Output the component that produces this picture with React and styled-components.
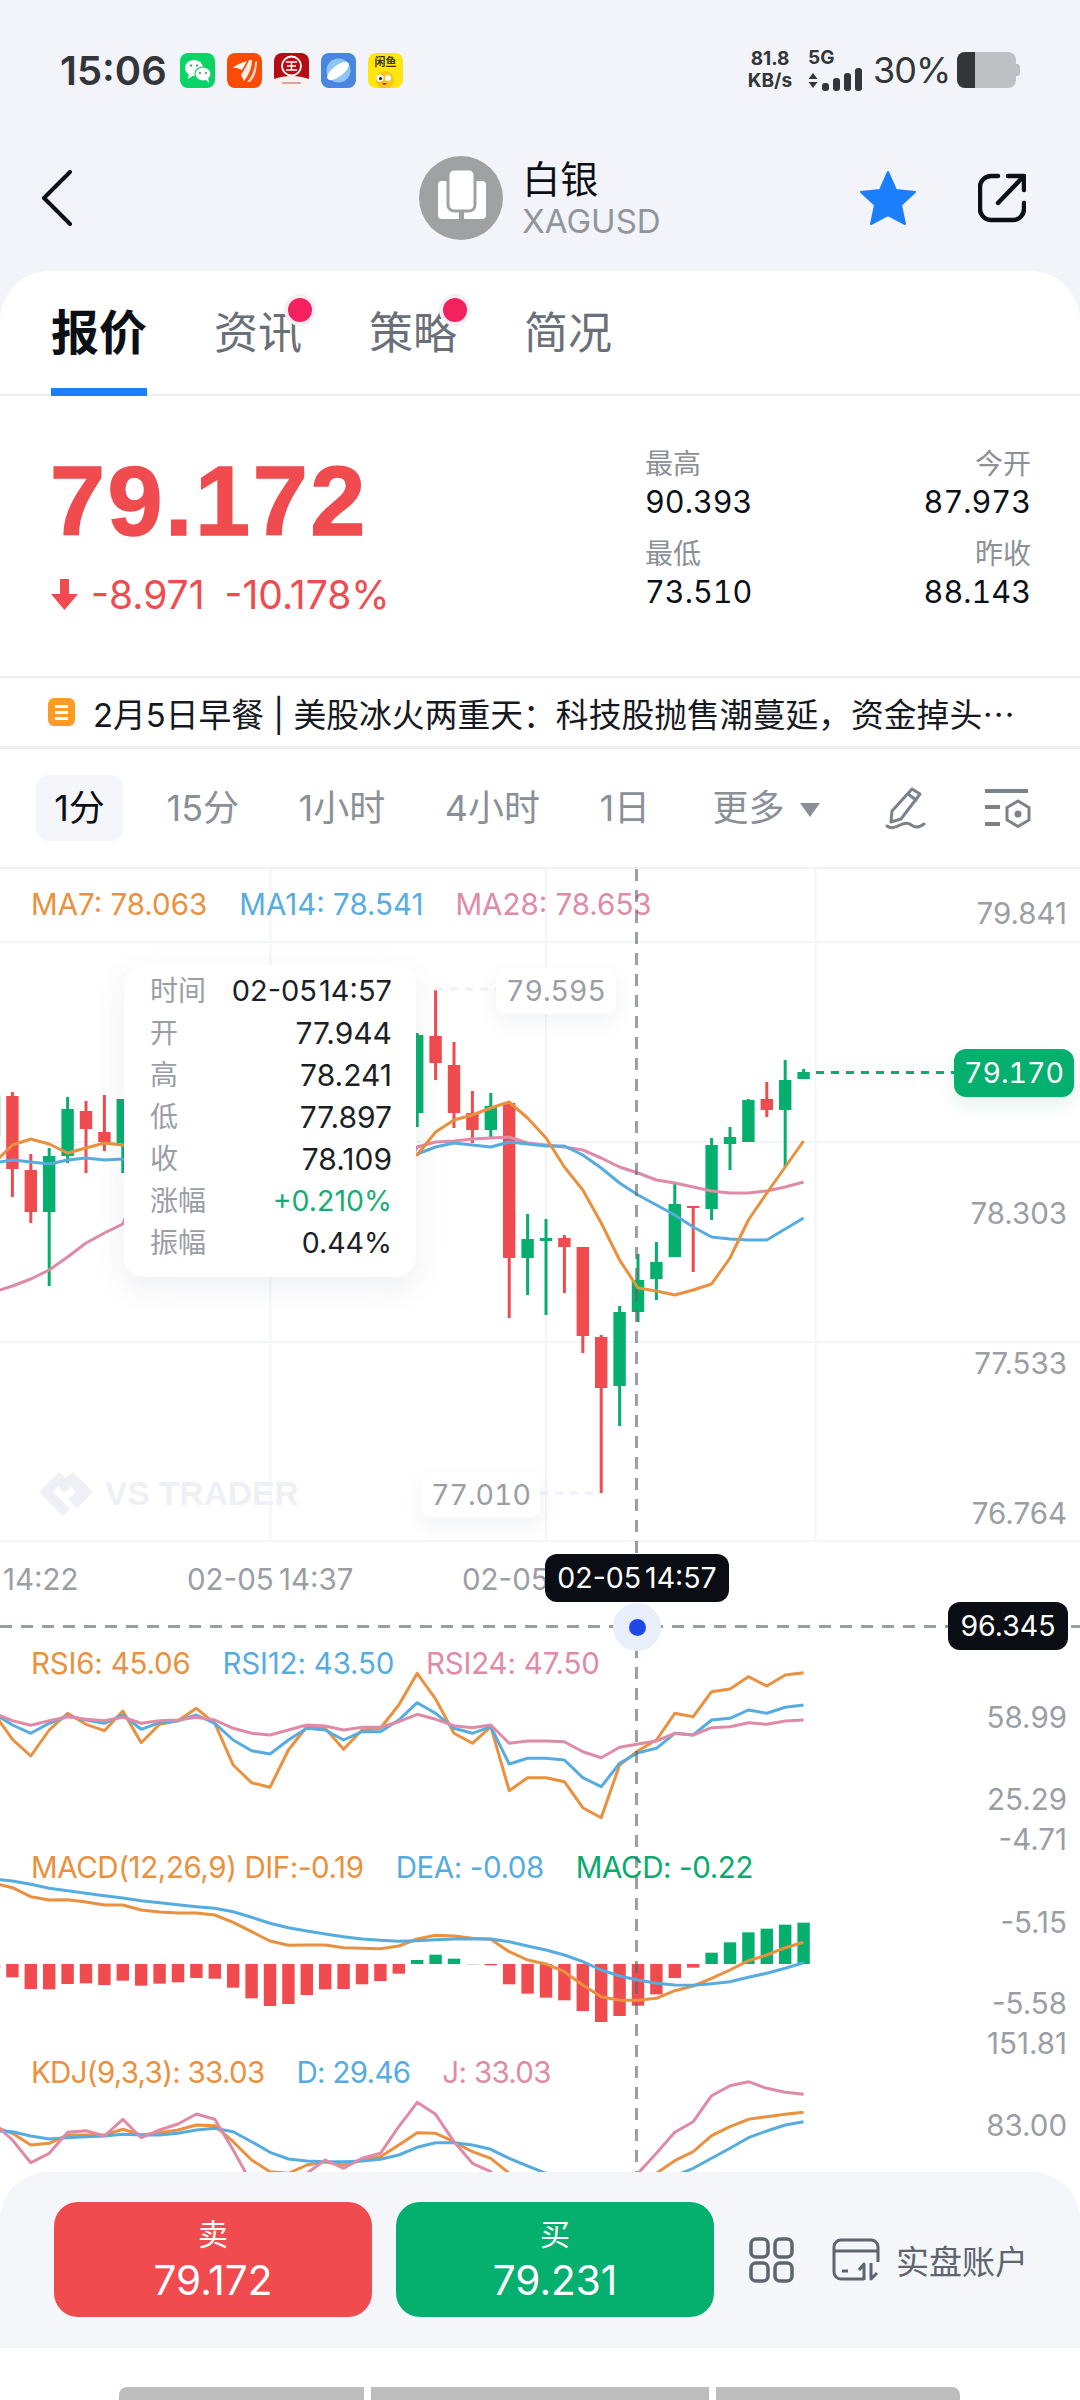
import React from 'react';
import styled, { createGlobalStyle } from 'styled-components';

const GlobalStyle = createGlobalStyle`
	html, body {
		margin: 0;
		padding: 0;
		background: #fff;
	}
	body {
		width: 1080px;
		height: 2400px;
		overflow: hidden;
		font-family: Inter, "Noto Sans CJK SC", sans-serif;
	}
	* {
		box-sizing: border-box;
	}
`;

const RED = '#f04b4f';
const GREEN = '#05b06e';
const ORANGE = '#e9913e';
const BLUE = '#57acdf';
const PINK = '#df8ba7';
const AXIS = '#9a9ea5';
const GRID = '#f3f5f8';

const Page = styled.div`
	width: 1080px;
	height: 2400px;
	display: flex;
	flex-direction: column;
	background: #f2f4f9;
`;

const StatusBar = styled.div`
	height: 138px;
	display: flex;
	align-items: center;
	padding: 2px 60px 0;
	color: #333538;
`;

const Clock = styled.span`
	font-size: 40px;
	font-weight: 600;
	width: 120px;
`;

const AppIcons = styled.div`
	display: flex;
	gap: 12px;
`;

const AppIcon = styled.svg`
	width: 35px;
	height: 35px;
	border-radius: 8px;
	display: block;
`;

const StatusRight = styled.div`
	margin-left: auto;
	display: flex;
	align-items: center;
`;

const Speed = styled.div`
	width: 46px;
	text-align: center;
	font-size: 19px;
	line-height: 22px;
	font-weight: 700;
	white-space: nowrap;
	margin-right: 15px;
`;

const Network = styled.div`
	width: 54px;
	font-size: 19px;
	font-weight: 700;
	line-height: 18px;
`;

const Percent = styled.span`
	width: 74px;
	font-size: 36px;
	letter-spacing: -1px;
	white-space: nowrap;
	margin: 0 10px 0 11px;
`;

const Battery = styled.div`
	width: 59px;
	height: 36px;
	border-radius: 8px;
	background: #bfc0c4;
	overflow: hidden;
	position: relative;
	&::before {
		content: '';
		display: block;
		width: 18px;
		height: 100%;
		background: #333538;
	}
`;

const BatteryCap = styled.div`
	width: 4px;
	height: 12px;
	background: #bfc0c4;
	border-radius: 0 3px 3px 0;
`;

const Header = styled.div`
	height: 120px;
	display: grid;
	grid-template-columns: 1fr auto 1fr;
	align-items: center;
	margin-bottom: 13px;
`;

const BackBox = styled.div`
	padding-left: 41px;
	display: flex;
`;

const Title = styled.div`
	display: flex;
	align-items: center;
	gap: 19px;
`;

const TitleText = styled.div`
	display: flex;
	flex-direction: column;
`;

const TitleName = styled.span`
	font-size: 38px;
	line-height: 46px;
	color: #0b0f16;
`;

const TitleCode = styled.span`
	font-size: 33px;
	line-height: 38px;
	color: #90959c;
`;

const HeaderActions = styled.div`
	display: flex;
	justify-content: flex-end;
	align-items: center;
	gap: 61px;
	padding-right: 54px;
`;

const Sheet = styled.div`
	flex: 1;
	min-height: 0;
	background: #fff;
	border-radius: 50px 50px 0 0;
	display: flex;
	flex-direction: column;
`;

const Tabs = styled.div`
	height: 125px;
	flex: none;
	display: flex;
	gap: 67px;
	padding-left: 51px;
	border-bottom: 2px solid #eceef1;
`;

const Tab = styled.div`
	position: relative;
	height: 125px;
	line-height: 124px;
	width: ${p => (p.$active ? 96 : 88)}px;
	text-align: center;
	font-size: ${p => (p.$active ? 48 : 44)}px;
	font-weight: ${p => (p.$active ? 700 : 400)};
	color: ${p => (p.$active ? '#0b0f16' : '#6a7079')};
	${p => p.$active && `
		&::after {
			content: '';
			position: absolute;
			left: 0;
			right: 0;
			bottom: 0;
			height: 8px;
			background: #1b7ffb;
		}
	`}
`;

const TabDot = styled.span`
	position: absolute;
	left: 74px;
	top: 27px;
	width: 24px;
	height: 24px;
	border-radius: 50%;
	background: #f5215e;
	box-shadow: 0 0 0 4px #f3eff5;
`;

const Quote = styled.div`
	height: 282px;
	flex: none;
	display: flex;
	justify-content: space-between;
	padding: 0 49px 0 50px;
	border-bottom: 2px solid #eceef1;
`;

const QuoteMain = styled.div`
	padding-top: 50px;
	color: ${RED};
`;

const BigPrice = styled.div`
	font-family: "Liberation Sans", Arial, sans-serif;
	font-size: 99px;
	line-height: 110px;
	font-weight: 700;
	letter-spacing: 2.5px;
	-webkit-text-stroke: 1.5px ${RED};
`;

const ChangeRow = styled.div`
	display: flex;
	align-items: center;
	margin-top: 13px;
	height: 50px;
	padding-left: 1px;
	font-size: 39px;
`;

const ChangeValue = styled.span`
	margin-left: ${p => p.$gap}px;
`;

const StatGrid = styled.div`
	width: 386px;
	padding-top: 50px;
	display: grid;
	grid-template-columns: 1fr 1fr;
	grid-auto-rows: 74px;
	row-gap: 16px;
`;

const Stat = styled.div`
	text-align: ${p => (p.$right ? 'right' : 'left')};
`;

const StatLabel = styled.div`
	font-size: 28px;
	line-height: 37px;
	color: #8c9097;
`;

const StatValue = styled.div`
	font-size: 30.6px;
	line-height: 37px;
	font-variant-numeric: tabular-nums;
	color: #0b0f16;
`;

const Notice = styled.div`
	height: 71px;
	flex: none;
	display: flex;
	align-items: center;
	gap: 18px;
	padding-left: 48px;
	color: #16191f;
	font-size: 32.8px;
	white-space: nowrap;
	border-bottom: 3px solid #eceef1;
`;

const NoticeIcon = styled.div`
	width: 27px;
	height: 28px;
	border-radius: 6px;
	background: #fd9b26;
	display: flex;
	flex-direction: column;
	justify-content: center;
	align-items: center;
	gap: 3px;
`;

const NoticeBar = styled.span`
	width: 13px;
	height: 3px;
	background: #fff;
`;

const Dots = styled.span`
	font-family: "Noto Sans CJK SC", sans-serif;
`;

const Periods = styled.div`
	height: 120px;
	flex: none;
	display: flex;
	align-items: center;
	gap: 27.5px;
	padding: 0 49px 0 36px;
	border-bottom: 2px solid #f0f2f5;
`;

const Period = styled.div`
	height: 66px;
	line-height: 66px;
	min-width: ${p => (p.$active ? '87px' : '0')};
	margin-left: ${p => p.$shift || 0}px;
	padding: 0 16px;
	border-radius: 12px;
	text-align: center;
	white-space: nowrap;
	font-size: 36px;
	color: ${p => (p.$active ? '#0b0f16' : '#8a9098')};
	background: ${p => (p.$active ? '#f4f6fa' : 'transparent')};
`;

const Caret = styled.span`
	display: inline-block;
	margin-left: 15px;
	border-left: 10.5px solid transparent;
	border-right: 10.5px solid transparent;
	border-top: 14px solid #8a9098;
	vertical-align: 4px;
`;

const PeriodTools = styled.div`
	margin-left: auto;
	display: flex;
	align-items: center;
	gap: 59px;
`;

const ChartArea = styled.div`
	position: relative;
	height: 1303px;
	flex: none;
	overflow: hidden;
	background: #fff;
`;

const Panel = styled.div`
	position: relative;
	height: ${p => p.$h}px;
`;

const PanelSvg = styled.svg`
	position: absolute;
	left: 0;
	top: 0;
	width: 1080px;
	height: 100%;
	overflow: visible;
`;

const Legend = styled.div`
	position: relative;
	display: flex;
	gap: 32px;
	padding-left: 31px;
	font-size: 29.5px;
	letter-spacing: ${p => p.$track || 0}px;
	line-height: ${p => p.$line}px;
	white-space: nowrap;
`;

const LegendItem = styled.span`
	color: ${p => p.$color};
`;

const AxisLabel = styled.span`
	position: absolute;
	right: 13px;
	transform: translateY(-50%);
	font-size: 29.5px;
	line-height: 34px;
	color: ${AXIS};
`;

const TimeLabel = styled.span`
	position: absolute;
	top: 20px;
	font-size: 29.5px;
	line-height: 34px;
	word-spacing: -3px;
	color: ${AXIS};
`;

const Watermark = styled.div`
	position: absolute;
	left: 39px;
	top: 603px;
	display: flex;
	align-items: center;
	gap: 12px;
	font-family: "Liberation Sans", Arial, sans-serif;
	font-size: 33.5px;
	font-weight: 700;
	color: #eff0f5;
`;

const Tooltip = styled.div`
	position: absolute;
	z-index: 3;
	left: 124px;
	top: 96px;
	width: 292px;
	height: 312px;
	padding: 5px 24px 0 26px;
	background: #fff;
	border-radius: 20px;
	box-shadow: 0 10px 30px rgba(80, 90, 120, 0.1);
`;

const TooltipRow = styled.div`
	display: flex;
	justify-content: space-between;
	height: 42px;
	line-height: 42px;
`;

const TooltipLabel = styled.span`
	font-size: 28px;
	color: #9a9ea5;
`;

const TooltipValue = styled.span`
	font-size: ${p => p.$size || 30}px;
	word-spacing: -6px;
	color: ${p => p.$color || '#1c1f26'};
`;

const PriceTag = styled.div`
	position: absolute;
	left: ${p => p.$left}px;
	top: ${p => p.$top}px;
	width: ${p => p.$width}px;
	height: 46px;
	line-height: 46px;
	text-align: center;
	font-size: 28.5px;
	font-variant-numeric: tabular-nums;
	color: ${AXIS};
	background: #fff;
	border-radius: 10px;
	box-shadow: 0 8px 20px rgba(80, 90, 120, 0.08);
`;

const LastPrice = styled.div`
	position: absolute;
	left: 954px;
	top: 180px;
	width: 120px;
	height: 48px;
	line-height: 48px;
	text-align: center;
	border-radius: 12px;
	font-size: 28.5px;
	font-variant-numeric: tabular-nums;
	color: #fff;
	background: ${GREEN};
	box-shadow: 0 8px 18px rgba(5, 176, 110, 0.12);
`;

const CrossV = styled.div`
	position: absolute;
	z-index: 2;
	left: 635px;
	top: 0;
	bottom: 0;
	width: 3px;
	background: repeating-linear-gradient(to bottom, rgba(95, 100, 110, 0.62) 0 12px, transparent 12px 21px);
`;

const CrossH = styled.div`
	position: absolute;
	z-index: 2;
	left: 0;
	right: 0;
	top: 83px;
	height: 3px;
	background: repeating-linear-gradient(to right, #9a9ea5 0 12px, transparent 12px 21px);
`;

const CrossDot = styled.div`
	position: absolute;
	z-index: 3;
	left: 613px;
	top: 61px;
	width: 48px;
	height: 48px;
	border-radius: 50%;
	background: #e9eefb;
	display: flex;
	align-items: center;
	justify-content: center;
	&::after {
		content: '';
		width: 17px;
		height: 17px;
		border-radius: 50%;
		background: #1f48e8;
	}
`;

const DarkPill = styled.div`
	position: absolute;
	z-index: 3;
	left: ${p => p.$left}px;
	top: ${p => p.$top}px;
	width: ${p => p.$width}px;
	height: 48px;
	line-height: 48px;
	text-align: center;
	font-size: ${p => p.$size}px;
	word-spacing: -4px;
	color: #fff;
	background: #0a0d14;
	border-radius: 12px;
`;

const BottomBar = styled.div`
	height: 176px;
	flex: none;
	display: flex;
	align-items: flex-start;
	padding: 30px 0 0 54px;
	background: #f4f6f9;
	border-radius: 48px 48px 0 0;
`;

const TradeButton = styled.div`
	width: 318px;
	height: 115px;
	margin-right: 24px;
	border-radius: 24px;
	background: ${p => p.$color};
	color: #fff;
	text-align: center;
`;

const TradeSide = styled.div`
	font-size: 30px;
	line-height: 36px;
	padding-top: 14px;
`;

const TradePrice = styled.div`
	font-size: 40.5px;
	line-height: 46px;
	margin-top: 6px;
`;

const BarTools = styled.div`
	display: flex;
	align-items: center;
	height: 115px;
	margin-left: 11px;
	gap: 38px;
`;

const Account = styled.div`
	display: flex;
	align-items: center;
	gap: 16px;
	font-size: 33px;
	color: #5f656e;
`;

const NavArea = styled.div`
	flex: 1;
	display: flex;
	align-items: flex-end;
	gap: 7px;
	padding-left: 119px;
	background: #fff;
`;

const NavSegment = styled.div`
	width: ${p => p.$w}px;
	height: 13px;
	background: #bdbdbd;
	border-radius: ${p => p.$radius};
`;

// candle x position, the bars are 18.4px apart
const xAt = i => 12.4 + 18.4 * i;

// the indicator values are read at 3x from the screenshot, so they stay whole numbers
const toPoints = (values, offset) =>
	values.map((v, k) => `${xAt(k - 1).toFixed(1)},${(v / 3 + offset).toFixed(1)}`).join(' ');

// [index, colour, body top, body bottom, wick top, wick bottom], in page y
const candles = [
	[-1, GREEN, 1095, 1137, 1095, 1137],
	[0, RED, 1096, 1169, 1092, 1197],
	[1, RED, 1170, 1212, 1154, 1223],
	[2, GREEN, 1156, 1212, 1148, 1286],
	[3, GREEN, 1109, 1156, 1097, 1163],
	[4, RED, 1111, 1129, 1101, 1173],
	[5, RED, 1132, 1142, 1095, 1151],
	[6, GREEN, 1099, 1143, 1099, 1173],
	[22, GREEN, 1035, 1113, 1033, 1127],
	[23, RED, 1036, 1063, 990, 1080],
	[24, RED, 1065, 1113, 1042, 1128],
	[25, RED, 1113, 1130, 1091, 1143],
	[26, GREEN, 1106, 1130, 1093, 1137],
	[27, RED, 1103, 1258, 1102, 1318],
	[28, GREEN, 1239, 1258, 1214, 1295],
	[29, GREEN, 1238, 1241, 1219, 1315],
	[30, RED, 1238, 1247, 1235, 1293],
	[31, RED, 1247, 1336, 1247, 1353],
	[32, RED, 1337, 1388, 1335, 1493],
	[33, GREEN, 1312, 1386, 1306, 1426],
	[34, GREEN, 1280, 1312, 1254, 1322],
	[35, GREEN, 1262, 1279, 1242, 1300],
	[36, GREEN, 1204, 1257, 1182, 1257],
	[37, RED, 1206, 1208, 1206, 1272],
	[38, GREEN, 1145, 1209, 1138, 1220],
	[39, GREEN, 1137, 1144, 1127, 1170],
	[40, GREEN, 1100, 1142, 1099, 1142],
	[41, RED, 1099, 1110, 1082, 1117],
	[42, GREEN, 1080, 1110, 1060, 1167],
	[43, GREEN, 1072, 1079, 1069, 1079],
];

// page y per bar: index -1..6, then 15 bars hidden by the tooltip, then 22..43
const withHidden = (left, hidden, right) => [...left, ...Array(15).fill(hidden), ...right];
const ma7 = withHidden(
	[1163, 1145, 1139, 1144, 1153, 1148, 1143, 1145],
	1145,
	[1155, 1132, 1120, 1115, 1108, 1102, 1118, 1138, 1167, 1190, 1223, 1260, 1288, 1291, 1295, 1290, 1284, 1258, 1220, 1193, 1167, 1141],
);
const ma14 = withHidden(
	[1163, 1160, 1162, 1164, 1160, 1158, 1160, 1159],
	1159,
	[1154, 1147, 1143, 1145, 1147, 1142, 1144, 1146, 1146, 1155, 1168, 1183, 1195, 1205, 1215, 1227, 1237, 1239, 1240, 1240, 1229, 1218],
);
const ma28 = withHidden(
	[1292, 1286, 1279, 1270, 1257, 1243, 1233, 1224],
	1180,
	[1147, 1142, 1141, 1139, 1138, 1137, 1143, 1145, 1147, 1150, 1158, 1167, 1173, 1180, 1183, 1187, 1191, 1193, 1193, 1191, 1187, 1182],
);
const maPoints = values => values.map((y, k) => `${xAt(k - 1).toFixed(1)},${y - 869}`).join(' ');

const rsi6 = [1000, 1078, 1128, 1050, 1000, 1033, 1052, 993, 1088, 1033, 1022, 985, 1030, 1155, 1208, 1222, 1110, 1040, 1045, 1108, 1050, 1045, 975, 880, 957, 1060, 1090, 1040, 1232, 1193, 1193, 1205, 1283, 1313, 1155, 1112, 1080, 1000, 1010, 935, 927, 890, 918, 885, 878];
const rsi12 = [1000, 1035, 1060, 1030, 1008, 1020, 1030, 1005, 1048, 1028, 1022, 1005, 1030, 1080, 1112, 1122, 1080, 1045, 1050, 1080, 1055, 1055, 1020, 968, 1000, 1045, 1060, 1040, 1152, 1135, 1135, 1140, 1193, 1220, 1150, 1118, 1105, 1060, 1065, 1020, 1015, 990, 1000, 982, 975];
const rsi24 = [1000, 1022, 1036, 1022, 1010, 1018, 1022, 1012, 1030, 1022, 1020, 1012, 1020, 1045, 1060, 1065, 1050, 1035, 1038, 1050, 1042, 1042, 1025, 1003, 1018, 1037, 1043, 1035, 1090, 1083, 1083, 1085, 1115, 1133, 1102, 1092, 1083, 1060, 1065, 1043, 1040, 1028, 1033, 1023, 1020];

const dif = [130, 143, 170, 180, 179, 186, 195, 195, 210, 216, 219, 219, 225, 247, 275, 303, 316, 315, 315, 323, 325, 326, 318, 297, 286, 288, 295, 298, 335, 360, 372, 395, 435, 470, 481, 481, 475, 452, 438, 415, 390, 362, 345, 323, 307];
const dea = [118, 123, 133, 145, 152, 160, 167, 174, 182, 188, 194, 200, 205, 215, 232, 250, 263, 273, 282, 290, 297, 301, 304, 302, 299, 297, 297, 297, 305, 318, 330, 345, 365, 390, 408, 420, 430, 435, 436, 431, 425, 412, 400, 385, 368];
// bar ends, baseline is 372
const macdBars = [385, 412, 447, 448, 432, 430, 435, 422, 437, 431, 427, 414, 416, 443, 475, 498, 492, 465, 448, 447, 433, 423, 401, 360, 344, 356, 374, 376, 433, 461, 473, 481, 513, 546, 528, 497, 463, 414, 383, 338, 307, 277, 266, 254, 248];

const kdjK = [860, 880, 915, 910, 885, 885, 885, 868, 885, 878, 870, 855, 857, 905, 960, 995, 1000, 975, 965, 975, 960, 950, 915, 878, 880, 905, 935, 955, 1000, 1040, 1080, 1100, 1120, 1110, 1080, 1040, 1000, 962, 935, 887, 860, 838, 830, 823, 817];
const kdjD = [872, 875, 888, 897, 893, 890, 888, 883, 885, 885, 880, 870, 865, 875, 905, 937, 957, 963, 965, 965, 963, 958, 945, 922, 908, 908, 915, 928, 955, 978, 1000, 1030, 1060, 1090, 1110, 1100, 1030, 1008, 985, 955, 925, 893, 873, 855, 845];
const kdjJ = [850, 900, 968, 940, 877, 872, 888, 838, 893, 870, 852, 822, 838, 930, 1030, 1080, 1040, 1000, 960, 985, 955, 940, 860, 787, 823, 905, 970, 995, 1050, 1100, 1130, 1150, 1150, 1100, 1040, 1000, 940, 877, 845, 767, 737, 725, 745, 757, 763];

const GridLines = () => (
	<g stroke={GRID} strokeWidth="2">
		<line x1="0" y1="73" x2="1080" y2="73" />
		<line x1="0" y1="273" x2="1080" y2="273" />
		<line x1="0" y1="473" x2="1080" y2="473" />
		<line x1="0" y1="672" x2="1080" y2="672" />
		<line x1="270.5" y1="0" x2="270.5" y2="672" />
		<line x1="546" y1="0" x2="546" y2="672" />
		<line x1="815.5" y1="0" x2="815.5" y2="672" />
	</g>
);

const Candle = ({ i, color, top, bottom, wickTop, wickBottom }) => (
	<g fill={color}>
		<rect x={xAt(i) - 1.5} y={wickTop - 869} width="3" height={wickBottom - wickTop} />
		<rect x={xAt(i) - 6.2} y={top - 869} width="12.4" height={bottom - top} />
	</g>
);

const Line = ({ points, color }) => (
	<polyline points={points} fill="none" stroke={color} strokeWidth="3" strokeLinejoin="round" />
);

const KlinePanel = () => (
	<Panel $h={673}>
		<PanelSvg>
			<GridLines />
			{candles.map(([i, color, top, bottom, wickTop, wickBottom]) => (
				<Candle key={i} i={i} color={color} top={top} bottom={bottom} wickTop={wickTop} wickBottom={wickBottom} />
			))}
			<Line points={maPoints(ma28)} color={PINK} />
			<Line points={maPoints(ma14)} color={BLUE} />
			<Line points={maPoints(ma7)} color={ORANGE} />
			<line x1="816" y1="203.5" x2="955" y2="203.5" stroke={GREEN} strokeWidth="3" strokeDasharray="8 7" />
			<line x1="435" y1="120" x2="496" y2="120" stroke="#eef0fb" strokeWidth="3" strokeDasharray="8 7" />
			<line x1="540" y1="624" x2="600" y2="624" stroke="#eef0fb" strokeWidth="3" strokeDasharray="8 7" />
		</PanelSvg>
		<Legend $line={70}>
			<LegendItem $color={ORANGE}>MA7: 78.063</LegendItem>
			<LegendItem $color={BLUE}>MA14: 78.541</LegendItem>
			<LegendItem $color={PINK}>MA28: 78.653</LegendItem>
		</Legend>
		<Watermark>
			<svg width="54" height="44" viewBox="0 0 54 44">
				<path d="M0 20 L20 0 L27 7 L14 20 L31 37 L24 44 Z M24 7 L34 0 L54 20 L38 36 L29 27 L37 20 L32 15 L25 21 L19 14 Z" fill="#eff0f5" />
			</svg>
			VS TRADER
		</Watermark>
		<AxisLabel style={{ top: 44 }}>79.841</AxisLabel>
		<AxisLabel style={{ top: 344 }}>78.303</AxisLabel>
		<AxisLabel style={{ top: 494 }}>77.533</AxisLabel>
		<AxisLabel style={{ top: 644 }}>76.764</AxisLabel>
		<Tooltip>
			<TooltipRow><TooltipLabel>时间</TooltipLabel><TooltipValue $size={29}>02-05 14:57</TooltipValue></TooltipRow>
			<TooltipRow><TooltipLabel>开</TooltipLabel><TooltipValue>77.944</TooltipValue></TooltipRow>
			<TooltipRow><TooltipLabel>高</TooltipLabel><TooltipValue>78.241</TooltipValue></TooltipRow>
			<TooltipRow><TooltipLabel>低</TooltipLabel><TooltipValue>77.897</TooltipValue></TooltipRow>
			<TooltipRow><TooltipLabel>收</TooltipLabel><TooltipValue>78.109</TooltipValue></TooltipRow>
			<TooltipRow><TooltipLabel>涨幅</TooltipLabel><TooltipValue $color="#16ad74" $size={28.5}>+0.210%</TooltipValue></TooltipRow>
			<TooltipRow><TooltipLabel>振幅</TooltipLabel><TooltipValue $size={28.5}>0.44%</TooltipValue></TooltipRow>
		</Tooltip>
		<PriceTag $left={496} $top={99} $width={120}>79.595</PriceTag>
		<PriceTag $left={422} $top={603} $width={118}>77.010</PriceTag>
		<LastPrice>79.170</LastPrice>
	</Panel>
);

const TimePanel = () => (
	<Panel $h={98}>
		<TimeLabel style={{ left: 3 }}>14:22</TimeLabel>
		<TimeLabel style={{ left: 187 }}>02-05 14:37</TimeLabel>
		<TimeLabel style={{ left: 462 }}>02-05</TimeLabel>
		<DarkPill $left={545} $top={12} $width={184} $size={28.5}>02-05 14:57</DarkPill>
		<CrossH />
		<CrossDot />
		<DarkPill $left={948} $top={60} $width={120} $size={28.5}>96.345</DarkPill>
	</Panel>
);

const RsiPanel = () => (
	<Panel $h={200}>
		<PanelSvg>
			<Line points={toPoints(rsi6, -260)} color={ORANGE} />
			<Line points={toPoints(rsi12, -260)} color={BLUE} />
			<Line points={toPoints(rsi24, -260)} color={PINK} />
		</PanelSvg>
		<Legend $line={46} $track={-0.2}>
			<LegendItem $color={ORANGE}>RSI6: 45.06</LegendItem>
			<LegendItem $color={BLUE}>RSI12: 43.50</LegendItem>
			<LegendItem $color={PINK}>RSI24: 47.50</LegendItem>
		</Legend>
		<AxisLabel style={{ top: 77 }}>58.99</AxisLabel>
		<AxisLabel style={{ top: 159 }}>25.29</AxisLabel>
		<AxisLabel style={{ top: 199 }}>-4.71</AxisLabel>
	</Panel>
);

const MacdPanel = () => (
	<Panel $h={205}>
		<PanelSvg>
			{macdBars.map((v, k) => {
				const up = v < 372;
				const faint = k === 26;
				return (
					<rect
						key={k}
						x={xAt(k - 1) - 6.2}
						y={Math.min(v, 372) / 3}
						width="12.4"
						height={Math.abs(v - 372) / 3}
						fill={faint ? '#e6b4b8' : up ? GREEN : RED}
					/>
				);
			})}
			<Line points={toPoints(dif, 0)} color={ORANGE} />
			<Line points={toPoints(dea, 0)} color={BLUE} />
		</PanelSvg>
		<Legend $line={54} $track={-0.4}>
			<LegendItem $color={ORANGE}>MACD(12,26,9) DIF:-0.19</LegendItem>
			<LegendItem $color={BLUE}>DEA: -0.08</LegendItem>
			<LegendItem $color="#07ab6d">MACD: -0.22</LegendItem>
		</Legend>
		<AxisLabel style={{ top: 82 }}>-5.15</AxisLabel>
		<AxisLabel style={{ top: 163 }}>-5.58</AxisLabel>
		<AxisLabel style={{ top: 203 }}>151.81</AxisLabel>
	</Panel>
);

const KdjPanel = () => (
	<Panel $h={127}>
		<PanelSvg>
			<Line points={toPoints(kdjK, -205)} color={ORANGE} />
			<Line points={toPoints(kdjD, -205)} color={BLUE} />
			<Line points={toPoints(kdjJ, -205)} color={PINK} />
		</PanelSvg>
		<Legend $line={54} $track={-0.7}>
			<LegendItem $color={ORANGE}>KDJ(9,3,3): 33.03</LegendItem>
			<LegendItem $color={BLUE}>D: 29.46</LegendItem>
			<LegendItem $color={PINK}>J: 33.03</LegendItem>
		</Legend>
		<AxisLabel style={{ top: 80 }}>83.00</AxisLabel>
	</Panel>
);

const WechatIcon = () => (
	<AppIcon viewBox="0 0 35 35">
		<rect width="35" height="35" fill="#0ad466" />
		<ellipse cx="14" cy="15" rx="9" ry="8" fill="#fff" />
		<path d="M9 21 L8 26 L14 22 Z" fill="#fff" />
		<ellipse cx="23" cy="21" rx="8" ry="7" fill="#fff" stroke="#0ad466" strokeWidth="1.2" />
		<path d="M26 27 L29 30 L28 25 Z" fill="#fff" />
		<circle cx="11" cy="12.5" r="1.1" fill="#0a9d50" />
		<circle cx="17" cy="12.5" r="1.1" fill="#0a9d50" />
		<circle cx="20" cy="20" r="1" fill="#0a9d50" />
		<circle cx="26" cy="20" r="1" fill="#0a9d50" />
	</AppIcon>
);

const WingIcon = () => (
	<AppIcon viewBox="0 0 35 35">
		<rect width="35" height="35" fill="#fb4b04" />
		<path d="M6 15 C10 11 17 9 20 8 L15 17 L10 15 Z" fill="#fff" opacity="0.95" />
		<path d="M22 7 C20 13 15 20 14 22 L17 28 C22 22 25 14 25 7 Z" fill="#fff" opacity="0.9" />
		<path d="M28 9 C28 16 25 24 20 29 L23 29 C28 25 30 16 30 8 Z" fill="#fff" opacity="0.8" />
	</AppIcon>
);

const BankIcon = () => (
	<AppIcon viewBox="0 0 35 35">
		<rect width="35" height="35" fill="#f8f2f0" />
		<path d="M0 0 H35 V26 C24 22 11 22 0 26 Z" fill="#b50d12" />
		<circle cx="17.5" cy="13" r="9.5" fill="none" stroke="#fff" strokeWidth="1.8" />
		<path d="M12 9 H23 M17.5 9 V17 M12 17 H23 M13 13 H22" stroke="#fff" strokeWidth="1.5" />
		<rect x="8" y="29" width="19" height="2" fill="#d9a7a0" />
	</AppIcon>
);

const PlanetIcon = () => (
	<AppIcon viewBox="0 0 35 35">
		<rect width="35" height="35" fill="#4a86e0" />
		<circle cx="17.5" cy="17.5" r="12" fill="#8dc5f5" />
		<ellipse cx="17" cy="18" rx="13" ry="5.5" transform="rotate(-38 17 18)" fill="#fff" />
	</AppIcon>
);

const YellowIcon = () => (
	<AppIcon viewBox="0 0 35 35">
		<rect width="35" height="35" fill="#ffe60f" />
		<text x="17.5" y="13" textAnchor="middle" fontSize="11" fontWeight="700" fill="#3b3510" fontFamily="Noto Sans CJK SC">闲鱼</text>
		<circle cx="17" cy="27" r="9" fill="#fcc417" />
		<circle cx="12" cy="25" r="3.5" fill="#fff" />
		<circle cx="20" cy="25" r="3" fill="#fff" />
		<circle cx="12.5" cy="25.5" r="1.6" fill="#222" />
		<path d="M14 30 Q16 34 19 30 Z" fill="#b3371c" />
	</AppIcon>
);

const NetworkIcon = () => (
	<svg width="54" height="24" viewBox="0 0 54 24" style={{ display: 'block', marginTop: 1 }}>
		<path d="M5 5 L9.5 11 H0.5 Z" fill="#333538" />
		<path d="M0.5 14 H9.5 L5 20 Z" fill="#333538" />
		<rect x="14" y="15" width="7" height="8" rx="3" fill="#333538" />
		<rect x="25" y="10" width="7" height="13" rx="3" fill="#333538" />
		<rect x="36" y="5" width="7" height="18" rx="3" fill="#333538" />
		<rect x="47" y="0" width="7" height="23" rx="3" fill="#333538" />
	</svg>
);

const BackIcon = () => (
	<svg width="32" height="56" viewBox="0 0 32 56">
		<path d="M29 2 L3 28 L29 54" fill="none" stroke="#0b0f16" strokeWidth="4" strokeLinecap="round" strokeLinejoin="round" />
	</svg>
);

const SilverLogo = () => (
	<svg width="84" height="84" viewBox="0 0 84 84" style={{ display: 'block' }}>
		<circle cx="42" cy="42" r="42" fill="#a0a1a3" />
		<rect x="19" y="25" width="24" height="38" rx="4" fill="#fff" />
		<rect x="43" y="25" width="24" height="38" rx="4" fill="#fff" />
		<rect x="29" y="13" width="27" height="42" rx="6" fill="#fff" stroke="#a0a1a3" strokeWidth="3" />
		<rect x="40" y="55" width="5" height="9" fill="#a0a1a3" />
	</svg>
);

const StarIcon = () => (
	<svg width="58" height="56" viewBox="0 0 58 56">
		<path d="M29 2 L37 20 L56 22 L42 35 L46 54 L29 45 L12 54 L16 35 L2 22 L21 20 Z" fill="#1b7ffb" stroke="#1b7ffb" strokeWidth="2" strokeLinejoin="round" />
	</svg>
);

const ShareIcon = () => (
	<svg width="48" height="50" viewBox="0 0 48 50" fill="none" stroke="#0b0f16" strokeWidth="4.5" strokeLinecap="round" strokeLinejoin="round">
		<path d="M20 3 H13 A11 11 0 0 0 2 14 V36 A11 11 0 0 0 13 47 H35 A11 11 0 0 0 46 36 V30" />
		<path d="M20 30 L45 4" />
		<path d="M30 3 H46 V17" />
	</svg>
);

const PenIcon = () => (
	<svg width="41" height="43" viewBox="0 0 41 43" fill="none" stroke="#7c828a" strokeWidth="3" strokeLinecap="round" strokeLinejoin="round">
		<path d="M27 2 L35 7 L16 32 L6 35 L7 24 Z" />
		<path d="M23 7 L31 13" />
		<path d="M2 39 C6 42 10 41 15 38 C21 35 24 36 28 39 C31 41 35 40 39 37" />
	</svg>
);

const SettingsIcon = () => (
	<svg width="46" height="41" viewBox="0 0 46 41" fill="none" stroke="#7c828a" strokeWidth="4">
		<path d="M0 3 H43" />
		<path d="M0 19 H15" />
		<path d="M0 36 H15" />
		<path d="M33 13 L44 19.5 V32 L33 38.5 L22 32 V19.5 Z" strokeWidth="3" />
		<circle cx="33" cy="26" r="3.5" fill="#7c828a" stroke="none" />
	</svg>
);

const GridIcon = () => (
	<svg width="45" height="46" viewBox="0 0 45 46" fill="none" stroke="#5f656e" strokeWidth="3.5">
		<rect x="2" y="2" width="17" height="18" rx="5" />
		<rect x="26" y="2" width="17" height="18" rx="5" />
		<rect x="2" y="26" width="17" height="18" rx="5" />
		<rect x="26" y="26" width="17" height="18" rx="5" />
	</svg>
);

const WalletIcon = () => (
	<svg width="48" height="44" viewBox="0 0 48 44" fill="none" stroke="#5f656e" strokeWidth="3">
		<path d="M32 41 H9 A7 7 0 0 1 2 34 V9 A7 7 0 0 1 9 2 H39 A7 7 0 0 1 46 9 V24" />
		<path d="M2 13 H46" />
		<path d="M10 33 H16" />
		<path d="M32 42 V26 L27 32 M39 25 V41 L45 35" strokeLinejoin="round" />
	</svg>
);

const quotes = [
	['最高', '90.393', '今开', '87.973'],
	['最低', '73.510', '昨收', '88.143'],
];

const App = () => {
	return (
		<Page>
			<GlobalStyle />
			<StatusBar>
				<Clock>15:06</Clock>
				<AppIcons>
					<WechatIcon />
					<WingIcon />
					<BankIcon />
					<PlanetIcon />
					<YellowIcon />
				</AppIcons>
				<StatusRight>
					<Speed>81.8<br />KB/s</Speed>
					<Network>
						5G
						<NetworkIcon />
					</Network>
					<Percent>30%</Percent>
					<Battery />
					<BatteryCap />
				</StatusRight>
			</StatusBar>
			<Header>
				<BackBox><BackIcon /></BackBox>
				<Title>
					<SilverLogo />
					<TitleText>
						<TitleName>白银</TitleName>
						<TitleCode>XAGUSD</TitleCode>
					</TitleText>
				</Title>
				<HeaderActions>
					<StarIcon />
					<ShareIcon />
				</HeaderActions>
			</Header>
			<Sheet>
				<Tabs>
					<Tab $active>报价</Tab>
					<Tab>资讯<TabDot /></Tab>
					<Tab>策略<TabDot /></Tab>
					<Tab>简况</Tab>
				</Tabs>
				<Quote>
					<QuoteMain>
						<BigPrice>79.172</BigPrice>
						<ChangeRow>
							<svg width="27" height="31" viewBox="0 0 27 31">
								<path d="M9 0 H18 V15 H27 L13.5 31 L0 15 H9 Z" fill={RED} />
							</svg>
							<ChangeValue $gap={13}>-8.971</ChangeValue>
							<ChangeValue $gap={20}>-10.178%</ChangeValue>
						</ChangeRow>
					</QuoteMain>
					<StatGrid>
						{quotes.map(([labelA, valueA, labelB, valueB]) => (
							<React.Fragment key={labelA}>
								<Stat>
									<StatLabel>{labelA}</StatLabel>
									<StatValue>{valueA}</StatValue>
								</Stat>
								<Stat $right>
									<StatLabel>{labelB}</StatLabel>
									<StatValue>{valueB}</StatValue>
								</Stat>
							</React.Fragment>
						))}
					</StatGrid>
				</Quote>
				<Notice>
					<NoticeIcon>
						<NoticeBar />
						<NoticeBar />
						<NoticeBar />
					</NoticeIcon>
					<span>2月5日早餐 | 美股冰火两重天：科技股抛售潮蔓延，资金掉头<Dots>…</Dots></span>
				</Notice>
				<Periods>
					<Period $active>1分</Period>
					<Period>15分</Period>
					<Period>1小时</Period>
					<Period>4小时</Period>
					<Period>1日</Period>
					<Period $shift={3}>更多<Caret /></Period>
					<PeriodTools>
						<PenIcon />
						<SettingsIcon />
					</PeriodTools>
				</Periods>
				<ChartArea>
					<KlinePanel />
					<TimePanel />
					<RsiPanel />
					<MacdPanel />
					<KdjPanel />
					<CrossV />
				</ChartArea>
				<BottomBar>
					<TradeButton $color={RED}>
						<TradeSide>卖</TradeSide>
						<TradePrice>79.172</TradePrice>
					</TradeButton>
					<TradeButton $color={GREEN}>
						<TradeSide>买</TradeSide>
						<TradePrice>79.231</TradePrice>
					</TradeButton>
					<BarTools>
						<GridIcon />
						<Account>
							<WalletIcon />
							实盘账户
						</Account>
					</BarTools>
				</BottomBar>
				<NavArea>
					<NavSegment $w={245} $radius="8px 0 0 0" />
					<NavSegment $w={338} $radius="0" />
					<NavSegment $w={244} $radius="0 8px 0 0" />
				</NavArea>
			</Sheet>
		</Page>
	);
};

export default App;
